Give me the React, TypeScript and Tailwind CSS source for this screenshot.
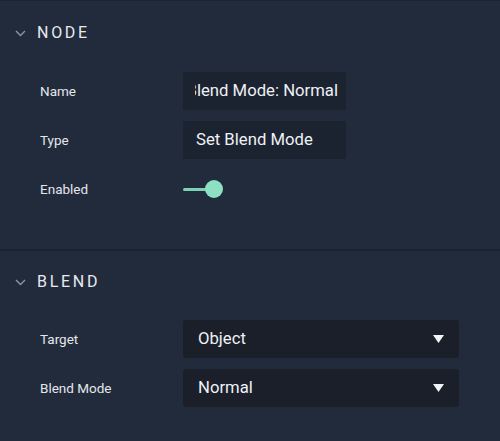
import React from "react";

function Chevron() {
  return (
    <svg width="11" height="7" viewBox="0 0 11 7" className="shrink-0">
      <path d="M1 1 L5.5 5.5 L10 1" fill="none" stroke="#8b95a3" strokeWidth="1.4" />
    </svg>
  );
}

function Header({ title }: { title: string }) {
  return (
    <div className="flex items-center h-[24px] pl-[15px] gap-[11px]">
      <Chevron />
      <span className="text-[16px] tracking-[0.17em] text-[#e6eaf0] font-normal">{title}</span>
    </div>
  );
}

function Label({ children }: { children: React.ReactNode }) {
  return <div className="w-[183px] pl-[40px] shrink-0 text-[13.5px] text-[#e3e7ec]">{children}</div>;
}

function Caret() {
  return (
    <svg width="11" height="8" viewBox="0 0 11 8">
      <path d="M0 0 L11 0 L5.5 8 Z" fill="#f2f4f7" />
    </svg>
  );
}

export default function App() {
  return (
    <div
      className="w-[500px] h-[441px] bg-[#222b3b] border-t border-[#1c2431] flex flex-col"
      style={{ fontFamily: "Roboto, 'Liberation Sans', sans-serif" }}
    >
      <div className="pt-[20px] pb-[41px]">
        <Header title="NODE" />
        <div className="mt-[27px] flex flex-col gap-[11px]">
          <div className="flex items-center h-[38px]">
            <Label>Name</Label>
            <div className="w-[163px] h-[38px] bg-[#1c2330] flex items-center pl-[12px] pr-[8px]">
              <div className="flex-1 flex justify-end overflow-hidden">
                <span className="whitespace-nowrap text-[16.7px] text-[#eef1f5]">Blend Mode: Normal</span>
              </div>
            </div>
          </div>
          <div className="flex items-center h-[38px]">
            <Label>Type</Label>
            <div className="w-[163px] h-[38px] bg-[#1c2330] flex items-center overflow-hidden pl-[13px]">
              <span className="whitespace-nowrap text-[16.7px] text-[#eef1f5]">Set Blend Mode</span>
            </div>
          </div>
          <div className="flex items-center h-[38px]">
            <Label>Enabled</Label>
            <div className="relative w-[41px] h-[20px] flex items-center">
              <div className="w-[32px] h-[3px] bg-[#7fd1b5] rounded-full" />
              <div className="absolute left-[22px] top-[1px] w-[18px] h-[18px] rounded-full bg-[#8ee0c2]" />
            </div>
          </div>
        </div>
      </div>
      <div className="h-[2px] bg-[#1b2230]" />
      <div className="pt-[19px]">
        <Header title="BLEND" />
        <div className="mt-[26px] flex flex-col gap-[11px]">
          <div className="flex items-center h-[38px]">
            <Label>Target</Label>
            <div className="w-[276px] h-[38px] bg-[#1a1f29] rounded-[3px] flex items-center justify-between pl-[15px] pr-[15px]">
              <span className="text-[16.7px] text-[#eef1f5]">Object</span>
              <Caret />
            </div>
          </div>
          <div className="flex items-center h-[38px]">
            <Label>Blend Mode</Label>
            <div className="w-[276px] h-[38px] bg-[#1a1f29] rounded-[3px] flex items-center justify-between pl-[15px] pr-[15px]">
              <span className="text-[16.7px] text-[#eef1f5]">Normal</span>
              <Caret />
            </div>
          </div>
        </div>
      </div>
    </div>
  );
}
